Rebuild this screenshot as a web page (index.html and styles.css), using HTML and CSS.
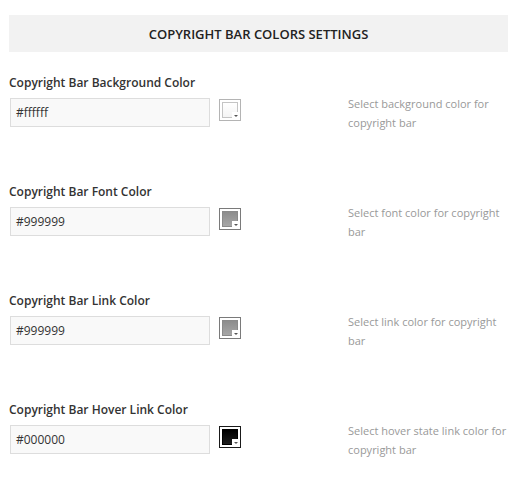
FILE: index.html
```html
<!DOCTYPE html>
<html>
<head>
<meta charset="utf-8">
<link rel="stylesheet" href="styles.css">
</head>
<body>
<div class="page">
  <div class="section-title">COPYRIGHT BAR COLORS SETTINGS</div>

  <div class="field">
    <div class="label">Copyright Bar Background Color</div>
    <div class="row">
      <div class="control">
        <div class="input">#ffffff</div>
        <div class="swatch sw-white"><span class="fill"></span><span class="arrow"></span></div>
      </div>
      <div class="desc">Select background color for<br>copyright bar</div>
    </div>
  </div>

  <div class="field">
    <div class="label">Copyright Bar Font Color</div>
    <div class="row">
      <div class="control">
        <div class="input">#999999</div>
        <div class="swatch sw-gray"><span class="fill"></span><span class="arrow"></span></div>
      </div>
      <div class="desc">Select font color for copyright<br>bar</div>
    </div>
  </div>

  <div class="field">
    <div class="label">Copyright Bar Link Color</div>
    <div class="row">
      <div class="control">
        <div class="input">#999999</div>
        <div class="swatch sw-gray"><span class="fill"></span><span class="arrow"></span></div>
      </div>
      <div class="desc">Select link color for copyright<br>bar</div>
    </div>
  </div>

  <div class="field">
    <div class="label">Copyright Bar Hover Link Color</div>
    <div class="row">
      <div class="control">
        <div class="input">#000000</div>
        <div class="swatch sw-black"><span class="fill"></span><span class="arrow"></span></div>
      </div>
      <div class="desc">Select hover state link color for<br>copyright bar</div>
    </div>
  </div>
</div>
</body>
</html>
```

FILE: styles.css
```css
html, body {
  margin: 0;
  padding: 0;
  background: #ffffff;
}

.page {
  padding: 15px 13px 0 9px;
  font-family: "Open Sans", "Liberation Sans", sans-serif;
  font-size: 12px;
  color: #333333;
}

.section-title {
  height: 37px;
  background: #f2f2f2;
  display: flex;
  align-items: center;
  justify-content: center;
  font-weight: 600;
  font-size: 13px;
  color: #222222;
  margin-bottom: 22px;
}

.field {
  margin-bottom: 51px;
}

.field:last-child {
  margin-bottom: 0;
}

.label {
  font-weight: 600;
  line-height: 18px;
  height: 18px;
  color: #333333;
}

.row {
  display: flex;
  align-items: flex-start;
}

.control {
  flex: none;
  display: flex;
  align-items: flex-start;
  width: 339px;
  margin-top: 6px;
}

.input {
  flex: none;
  box-sizing: border-box;
  width: 200px;
  height: 29px;
  margin-left: 1px;
  border: 1px solid #dddddd;
  background: #f9f9f9;
  padding-left: 5px;
  line-height: 27px;
  color: #333333;
}

.swatch {
  flex: none;
  position: relative;
  box-sizing: border-box;
  width: 22px;
  height: 22px;
  margin-left: 9px;
  margin-top: 1px;
  border: 1px solid #b4b4b4;
  background: #ffffff;
  padding: 2px;
}

.swatch .fill {
  display: block;
  box-sizing: border-box;
  width: 16px;
  height: 16px;
  border: 1px solid #c8c8c8;
}

.sw-white .fill {
  background: linear-gradient(#ffffff, #f4f4f4);
  border-color: #c4c4c4;
}

.sw-gray {
  border-color: #7a7a7a;
}

.sw-gray .fill {
  background: linear-gradient(#8c8c8c, #a6a6a6);
  border-color: #8a8a8a;
}

.sw-black {
  border-color: #1a1a1a;
}

.sw-black .fill {
  background: linear-gradient(#000000, #1e1e1e);
  border-color: #000000;
}

.swatch .arrow {
  position: absolute;
  right: 1px;
  bottom: 1px;
  width: 7px;
  height: 7px;
  background: #ffffff;
}

.swatch .arrow::after {
  content: "";
  position: absolute;
  left: 2px;
  top: 3px;
  border-left: 2px solid transparent;
  border-right: 2px solid transparent;
  border-top: 2px solid #555555;
}

.desc {
  flex: none;
  white-space: nowrap;
  margin-top: 2px;
  color: #999999;
  font-size: 11px;
  line-height: 19px;
}
```
